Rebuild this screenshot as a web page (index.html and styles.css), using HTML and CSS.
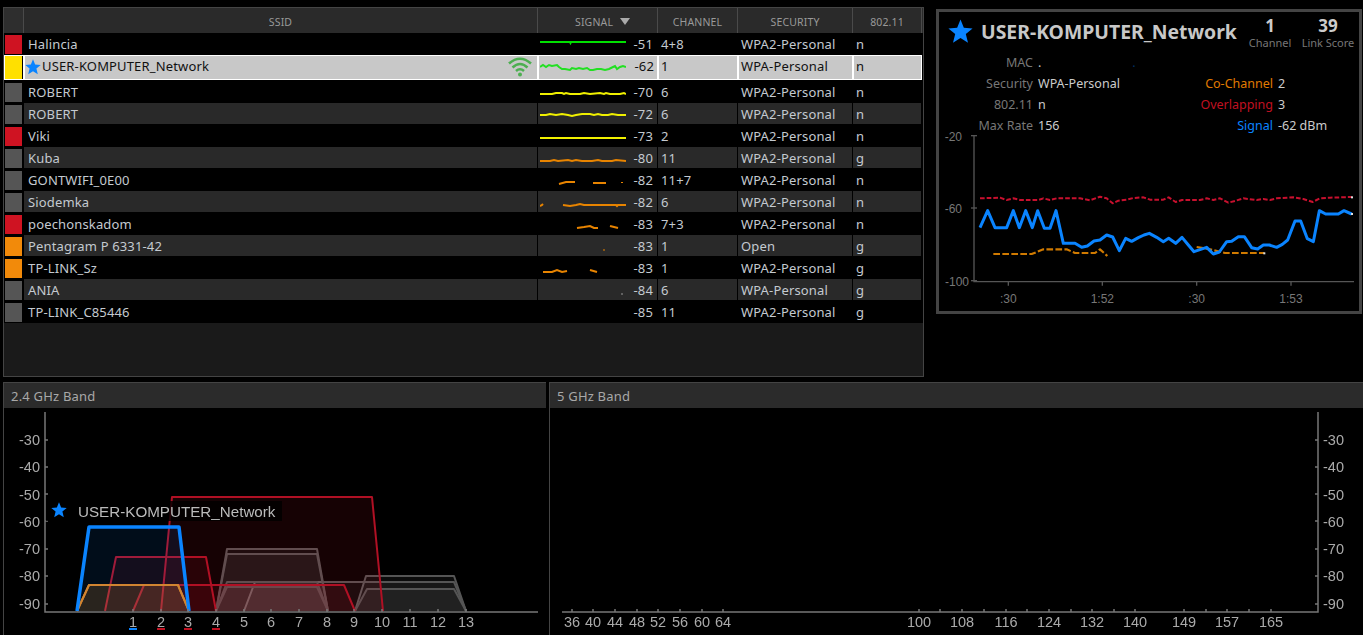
FILE: index.html
```html
<!DOCTYPE html>
<html lang="en">
<head>
	<meta charset="UTF-8">
	<title>Network analyzer</title>
	<link rel="stylesheet" href="styles.css">
</head>
<body>
	<svg class="defs" width="0" height="0">
		<symbol id="star" viewBox="0 0 24 24">
			<polygon points="12,0.5 15.2,8.4 23.6,9 17.1,14.4 19.2,22.8 12,18.3 4.8,22.8 6.9,14.4 0.4,9 8.8,8.4"/>
		</symbol>
	</svg>

	<div class="top">
		<div class="table">
			<div class="row head">
				<div class="cell"></div>
				<div class="cell">SSID</div>
				<div class="cell sorted">SIGNAL <span class="sort"></span></div>
				<div class="cell">CHANNEL</div>
				<div class="cell">SECURITY</div>
				<div class="cell">802.11</div>
			</div>

			<div class="row">
				<div class="cell swatch"><span class="red"></span></div>
				<div class="cell name">Halincia</div>
				<div class="cell signal">
					<svg class="spark green" viewBox="0 0 86 22"><polyline points="0,9 30,9 30.5,10 31,9 86,9"/></svg>
					<span>-51</span>
				</div>
				<div class="cell">4+8</div>
				<div class="cell">WPA2-Personal</div>
				<div class="cell">n</div>
			</div>

			<div class="row selected">
				<div class="cell swatch"><span class="yellow"></span></div>
				<div class="cell name">
					<svg class="row-star"><use href="#star"/></svg><span>USER-KOMPUTER_Network</span>
					<svg class="wifi" viewBox="0 0 24 20">
						<path d="M1,6.5 Q12,-3 23,6.5"/>
						<path d="M4.5,10.5 Q12,3.5 19.5,10.5"/>
						<path d="M8,14 Q12,10.5 16,14"/>
						<circle cx="12" cy="17.5" r="2"/>
					</svg>
				</div>
				<div class="cell signal">
					<svg class="spark bright" viewBox="0 0 86 26"><polyline points="0,12 3,10 6,12 9,10 12,11 17,10 19,12 22,14 25,14 30,15 32,13 36,14 39,13 43,14 47,13 50,15 53,15 57,14 61,14 65,15 69,14 73,12 75,11 77,14 80,12 83,11 86,12"/></svg>
					<span>-62</span>
				</div>
				<div class="cell">1</div>
				<div class="cell">WPA-Personal</div>
				<div class="cell">n</div>
			</div>

			<div class="row">
				<div class="cell swatch"><span></span></div>
				<div class="cell name">ROBERT</div>
				<div class="cell signal">
					<svg class="spark lemon" viewBox="0 0 86 22"><polyline points="0,13 12,13 16,12 22,12 24,13 26,12 30,13 40,13 44,12 50,13 60,12 64,13 66,12 70,13 80,13 84,12 86,13"/></svg>
					<span>-70</span>
				</div>
				<div class="cell">6</div>
				<div class="cell">WPA2-Personal</div>
				<div class="cell">n</div>
			</div>

			<div class="row">
				<div class="cell swatch"><span></span></div>
				<div class="cell name">ROBERT</div>
				<div class="cell signal">
					<svg class="spark lemon" viewBox="0 0 86 22"><polyline points="0,12 6,12 10,11 16,12 22,11 28,12 32,13 36,12 42,11 50,11 54,12 58,11 62,12 68,12 72,11 78,12 86,12"/></svg>
					<span>-72</span>
				</div>
				<div class="cell">6</div>
				<div class="cell">WPA2-Personal</div>
				<div class="cell">n</div>
			</div>

			<div class="row">
				<div class="cell swatch"><span class="red"></span></div>
				<div class="cell name">Viki</div>
				<div class="cell signal">
					<svg class="spark lemon" viewBox="0 0 86 22"><polyline points="0,13 86,13"/></svg>
					<span>-73</span>
				</div>
				<div class="cell">2</div>
				<div class="cell">WPA2-Personal</div>
				<div class="cell">n</div>
			</div>

			<div class="row">
				<div class="cell swatch"><span></span></div>
				<div class="cell name">Kuba</div>
				<div class="cell signal">
					<svg class="spark amber" viewBox="0 0 86 22"><polyline points="0,14 10,14 14,13 18,14 28,13 32,14 36,13 42,14 52,14 58,13 62,14 72,14 76,13 86,14"/></svg>
					<span>-80</span>
				</div>
				<div class="cell">11</div>
				<div class="cell">WPA2-Personal</div>
				<div class="cell">g</div>
			</div>

			<div class="row">
				<div class="cell swatch"><span></span></div>
				<div class="cell name">GONTWIFI_0E00</div>
				<div class="cell signal">
					<svg class="spark amber" viewBox="0 0 86 22"><polyline points="19,15 26,13 35,13"/><polyline points="53,14 66,14"/><polyline class="dot" points="82,13 82,14"/></svg>
					<span>-82</span>
				</div>
				<div class="cell">11+7</div>
				<div class="cell">WPA2-Personal</div>
				<div class="cell">n</div>
			</div>

			<div class="row">
				<div class="cell swatch"><span></span></div>
				<div class="cell name">Siodemka</div>
				<div class="cell signal">
					<svg class="spark amber" viewBox="0 0 86 22"><polyline points="0,15 2,14 3,13"/><polyline points="23,14 30,15 36,14 40,13 44,14 76,14 77,15 78,14 86,14"/></svg>
					<span>-82</span>
				</div>
				<div class="cell">6</div>
				<div class="cell">WPA2-Personal</div>
				<div class="cell">n</div>
			</div>

			<div class="row">
				<div class="cell swatch"><span class="red"></span></div>
				<div class="cell name">poechonskadom</div>
				<div class="cell signal">
					<svg class="spark amber" viewBox="0 0 86 22"><polyline points="37,15 44,14 50,13 54,15 58,15"/><polyline points="70,13 78,15"/></svg>
					<span>-83</span>
				</div>
				<div class="cell">7+3</div>
				<div class="cell">WPA2-Personal</div>
				<div class="cell">n</div>
			</div>

			<div class="row">
				<div class="cell swatch"><span class="orange"></span></div>
				<div class="cell name">Pentagram P 6331-42</div>
				<div class="cell signal">
					<svg class="spark amber thin" viewBox="0 0 86 22"><polyline points="64,14 64,16"/></svg>
					<span>-83</span>
				</div>
				<div class="cell">1</div>
				<div class="cell">Open</div>
				<div class="cell">g</div>
			</div>

			<div class="row">
				<div class="cell swatch"><span class="orange"></span></div>
				<div class="cell name">TP-LINK_Sz</div>
				<div class="cell signal">
					<svg class="spark amber" viewBox="0 0 86 22"><polyline points="3,15 12,15 17,13 22,15 27,14"/><polyline points="50,13 57,15"/></svg>
					<span>-83</span>
				</div>
				<div class="cell">1</div>
				<div class="cell">WPA2-Personal</div>
				<div class="cell">g</div>
			</div>

			<div class="row">
				<div class="cell swatch"><span></span></div>
				<div class="cell name">ANIA</div>
				<div class="cell signal">
					<svg class="spark ash thin" viewBox="0 0 86 22"><polyline points="82,14 82,16"/></svg>
					<span>-84</span>
				</div>
				<div class="cell">6</div>
				<div class="cell">WPA-Personal</div>
				<div class="cell">g</div>
			</div>

			<div class="row">
				<div class="cell swatch"><span></span></div>
				<div class="cell name">TP-LINK_C85446</div>
				<div class="cell signal">
					<svg class="spark" viewBox="0 0 86 22"></svg>
					<span>-85</span>
				</div>
				<div class="cell">11</div>
				<div class="cell">WPA2-Personal</div>
				<div class="cell">g</div>
			</div>
		</div>

		<div class="detail">
			<div class="detail-head">
				<svg class="detail-star"><use href="#star"/></svg>
				<div class="detail-title">USER-KOMPUTER_Network</div>
				<div class="stat"><b>1</b><span>Channel</span></div>
				<div class="stat"><b>39</b><span>Link Score</span></div>
			</div>
			<div class="facts">
				<div class="label">MAC</div><div class="value">.<span class="mac-end">.</span></div><div class="label"></div><div class="value"></div>
				<div class="label">Security</div><div class="value">WPA-Personal</div><div class="label co">Co-Channel</div><div class="value">2</div>
				<div class="label">802.11</div><div class="value">n</div><div class="label over">Overlapping</div><div class="value">3</div>
				<div class="label">Max Rate</div><div class="value">156</div><div class="label sig">Signal</div><div class="value">-62 dBm</div>
			</div>
			<!-- drawn in 3x units -->
			<svg class="history" viewBox="27 -120 1260 573">
				<g class="axis">
					<polyline points="132,-73 132,365 1272,365"/>
					<polyline points="123,-73 141,-73"/>
					<polyline points="123,144 141,144"/>
					<polyline points="123,362 141,362"/>
					<polyline points="235,365 235,377"/>
					<polyline points="517,365 517,377"/>
					<polyline points="800,365 800,377"/>
					<polyline points="1083,365 1083,377"/>
				</g>
				<g class="ticks">
					<text x="96" y="-56" text-anchor="end">-20</text>
					<text x="96" y="160" text-anchor="end">-60</text>
					<text x="117" y="378" text-anchor="end">-100</text>
					<text x="235" y="428" text-anchor="middle">:30</text>
					<text x="517" y="428" text-anchor="middle">1:52</text>
					<text x="800" y="428" text-anchor="middle">:30</text>
					<text x="1083" y="428" text-anchor="middle">1:53</text>
				</g>
				<polyline class="h-red" points="150,115 210,113 230,120 250,115 270,120 325,120 340,115 360,120 380,115 450,115 480,121 510,110 530,115 548,130 565,122 590,119 610,114 640,112 660,119 700,119 716,112 737,126 756,120 810,120 830,115 850,120 870,115 895,128 915,123 940,115 980,120 1000,117 1020,120 1040,115 1090,112 1120,117 1148,126 1170,115 1200,113 1265,111"/>
				<polyline class="h-orange" points="190,282 305,282 340,268 410,268 435,279 495,279 510,268 532,288"/>
				<polyline class="h-orange" points="800,261 840,268 885,279 1003,279"/>
				<polyline class="h-blue" points="150,203 173,152 195,203 230,203 250,152 268,203 287,152 307,203 323,152 343,205 360,205 378,152 400,250 435,250 455,262 472,258 492,243 510,240 530,225 548,231 568,272 587,235 605,244 625,233 642,225 658,220 680,232 700,245 716,235 737,250 756,232 775,255 792,275 812,268 830,262 850,282 868,276 890,245 905,244 925,230 943,230 965,263 983,267 1000,255 1018,255 1040,262 1057,253 1073,240 1095,183 1112,183 1132,236 1150,245 1168,152 1187,162 1225,162 1242,152 1265,162"/>
				<rect class="end" x="1263" y="109" width="6" height="6"/>
				<rect class="end" x="1263" y="159" width="6" height="6"/>
				<rect class="end" x="1000" y="277" width="6" height="6"/>
			</svg>
		</div>
	</div>

	<div class="bands">
		<div class="band narrow">
			<div class="band-head">2.4 GHz Band</div>
			<svg class="band-plot" viewBox="4 408 542 227">
				<g class="net gray">
					<polyline points="355,611 366,576 454,576 466,611"/>
					<polyline points="244,611 255,582 454,582 466,611"/>
					<polyline points="355,611 367,589 454,589 466,611"/>
					<polyline points="216,611 227,549 317,549 328,611"/>
					<polyline points="216,611 227,554 317,554 328,611"/>
					<polyline points="216,611 227,582 317,582 328,611"/>
					<polyline points="216,611 227,587 317,587 328,611"/>
				</g>
				<g class="net red">
					<polyline points="161,611 172,497 372,497 383,611"/>
					<polyline points="105,611 116,557 206,557 216,611"/>
					<polyline points="133,611 144,585 344,585 355,611"/>
				</g>
				<polyline class="net-one orange" points="77,611 89,585 178,585 189,611"/>
				<polyline class="net-one orange" points="77,611 89,585 178,585 189,611"/>
				<polyline class="net-one blue" points="77,611 89,527 179,527 189,611"/>

				<g class="axis">
					<polyline points="45,412 45,612 538,612"/>
					<polyline points="45,440 48,440"/><polyline points="45,467 48,467"/><polyline points="45,494 48,494"/>
					<polyline points="45,521 48,521"/><polyline points="45,549 48,549"/><polyline points="45,576 48,576"/><polyline points="45,604 48,604"/>
					<polyline points="133,609 133,612"/><polyline points="161,609 161,612"/><polyline points="188,609 188,612"/><polyline points="216,609 216,612"/>
					<polyline points="244,609 244,612"/><polyline points="271,609 271,612"/><polyline points="299,609 299,612"/><polyline points="327,609 327,612"/>
					<polyline points="354,609 354,612"/><polyline points="382,609 382,612"/><polyline points="410,609 410,612"/><polyline points="438,609 438,612"/><polyline points="466,609 466,612"/>
				</g>
				<g class="scale">
					<text x="40" y="445" text-anchor="end">-30</text>
					<text x="40" y="472" text-anchor="end">-40</text>
					<text x="40" y="500" text-anchor="end">-50</text>
					<text x="40" y="527" text-anchor="end">-60</text>
					<text x="40" y="554" text-anchor="end">-70</text>
					<text x="40" y="581" text-anchor="end">-80</text>
					<text x="40" y="609" text-anchor="end">-90</text>
				</g>
				<g class="scale" text-anchor="middle">
					<text x="133" y="627">1</text><text x="161" y="627">2</text><text x="188" y="627">3</text><text x="216" y="627">4</text>
					<text x="244" y="627">5</text><text x="271" y="627">6</text><text x="299" y="627">7</text><text x="327" y="627">8</text>
					<text x="354" y="627">9</text><text x="382" y="627">10</text><text x="410" y="627">11</text><text x="438" y="627">12</text><text x="466" y="627">13</text>
				</g>
				<rect class="mark-blue" x="129" y="628" width="8" height="2"/>
				<rect class="mark-red" x="157" y="628" width="8" height="2"/>
				<rect class="mark-red" x="184" y="628" width="8" height="2"/>
				<rect class="mark-red" x="212" y="628" width="8" height="2"/>

				<rect class="tag-bg" x="46" y="501" width="236" height="20"/>
				<use class="tag-star" href="#star" x="51" y="502" width="16" height="16"/>
				<text class="tag" x="78" y="517">USER-KOMPUTER_Network</text>
			</svg>
		</div>

		<div class="band wide">
			<div class="band-head">5 GHz Band</div>
			<svg class="band-plot" viewBox="550 408 813 227">
				<g class="axis">
					<polyline points="1318,412 1318,612 562,612"/>
					<polyline points="1315,440 1318,440"/><polyline points="1315,467 1318,467"/><polyline points="1315,494 1318,494"/>
					<polyline points="1315,521 1318,521"/><polyline points="1315,549 1318,549"/><polyline points="1315,576 1318,576"/><polyline points="1315,604 1318,604"/>
					<polyline points="572,609 572,612"/><polyline points="593,609 593,612"/><polyline points="615,609 615,612"/><polyline points="637,609 637,612"/>
					<polyline points="658,609 658,612"/><polyline points="680,609 680,612"/><polyline points="702,609 702,612"/><polyline points="723,609 723,612"/>
					<polyline points="919,609 919,612"/><polyline points="940,609 940,612"/><polyline points="962,609 962,612"/><polyline points="984,609 984,612"/>
					<polyline points="1006,609 1006,612"/><polyline points="1027,609 1027,612"/><polyline points="1049,609 1049,612"/><polyline points="1071,609 1071,612"/>
					<polyline points="1092,609 1092,612"/><polyline points="1114,609 1114,612"/><polyline points="1135,609 1135,612"/><polyline points="1184,609 1184,612"/>
					<polyline points="1206,609 1206,612"/><polyline points="1227,609 1227,612"/><polyline points="1249,609 1249,612"/><polyline points="1271,609 1271,612"/>
				</g>
				<g class="scale">
					<text x="1323" y="445">-30</text>
					<text x="1323" y="472">-40</text>
					<text x="1323" y="500">-50</text>
					<text x="1323" y="527">-60</text>
					<text x="1323" y="554">-70</text>
					<text x="1323" y="581">-80</text>
					<text x="1323" y="609">-90</text>
				</g>
				<g class="scale" text-anchor="middle">
					<text x="572" y="627">36</text><text x="593" y="627">40</text><text x="615" y="627">44</text><text x="637" y="627">48</text>
					<text x="658" y="627">52</text><text x="680" y="627">56</text><text x="702" y="627">60</text><text x="723" y="627">64</text>
					<text x="919" y="627">100</text><text x="962" y="627">108</text><text x="1006" y="627">116</text><text x="1049" y="627">124</text>
					<text x="1092" y="627">132</text><text x="1135" y="627">140</text><text x="1184" y="627">149</text><text x="1227" y="627">157</text><text x="1271" y="627">165</text>
				</g>
			</svg>
		</div>
	</div>
</body>
</html>
```

FILE: styles.css
```css
html, body {
	margin: 0;
	height: 100%;
	overflow: hidden;
}
body {
	background: #000;
	color: #ccc;
	font-family: "Noto Sans", "Open Sans", sans-serif;
	font-size: 13px;
	display: flex;
	flex-direction: column;
}
.defs {
	position: absolute;
}
.top {
	display: flex;
	align-items: flex-start;
	gap: 12px;
	height: 382px;
	padding: 7px 1px 0 3px;
	box-sizing: border-box;
}

/* network table */
.table {
	width: 921px;
	height: 370px;
	flex: none;
	box-sizing: border-box;
	border: 1px solid #444;
	background: #1a1a1a;
}
.row {
	display: grid;
	grid-template-columns: 20px 514px 120px 80px 115px 69px;
	height: 22px;
	background: #000;
}
.row:nth-child(odd) .cell {
	background: #292929;
	height: 21px;
}
.row.head {
	height: 25px;
	background: #2a2a2a;
}
.row.head .cell {
	height: 25px;
	background: #2a2a2a;
	justify-content: center;
	padding: 2px 0 0;
	color: #999;
	font-size: 10.5px;
	border-right: 1px solid #4a4a4a;
}
.row.head .cell.sorted {
	padding-left: 10px;
}
.head .sort {
	display: inline-block;
	margin-left: 7px;
	border-left: 5px solid transparent;
	border-right: 5px solid transparent;
	border-top: 7px solid #aaa;
}
.row.head .cell:first-child {
	background: #2e2e2e;
}
.cell {
	display: flex;
	align-items: center;
	box-sizing: border-box;
	padding-left: 3px;
	border-right: 1px solid #000;
	color: #c4cad0;
	letter-spacing: .15px;
	white-space: nowrap;
}
.row .cell.swatch {
	padding: 1px 1px 0 1px;
	background: #000;
	height: 22px;
}
.swatch span {
	display: block;
	width: 17px;
	height: 19px;
	background: #555;
}
.swatch .red {
	background: #cf1322;
}
.swatch .orange {
	background: #f28a0a;
}
.swatch .yellow {
	background: #ffe000;
	height: 23px;
	width: 17px;
}
.name {
	padding-left: 4px;
	position: relative;
}
.signal {
	padding: 0 4px 0 2px;
	justify-content: space-between;
}
.signal span {
	margin-left: 2px;
}
.spark {
	width: 86px;
	height: 22px;
	flex: none;
}
.spark polyline {
	fill: none;
	stroke-width: 2;
}
.green polyline { stroke: #00e000; }
.bright polyline { stroke: #22e022; }
.lemon polyline { stroke: #f0f000; }
.amber polyline { stroke: #e88400; }
.ash polyline { stroke: #999; }
.spark.thin polyline { stroke-width: 1; }

.row.selected {
	height: 26px;
}
.row.selected .cell {
	background: #c8c8c8;
	border: 1px solid #fff;
	color: #111;
	height: 25px;
	padding: 0 0 3px 2px;
}
.row.selected .cell.name {
	padding-left: 0;
}
.row.selected .cell.signal {
	padding: 0 3px 3px 1px;
}
.row.selected .cell.swatch {
	padding: 0;
	height: 25px;
	background: #000;
}
.selected .spark {
	height: 26px;
	margin-bottom: -3px;
}
.selected .signal span {
	align-self: center;
}
.row-star {
	width: 16px;
	height: 16px;
	margin: 2px 1px 0 0;
	flex: none;
	fill: #0a84ff;
}
.wifi {
	position: absolute;
	right: 5px;
	top: 1px;
	width: 24px;
	height: 20px;
	fill: none;
	stroke: #4caf50;
	stroke-width: 2.6;
}
.wifi circle {
	fill: #4caf50;
	stroke: none;
}

/* selected network panel */
.detail {
	flex: 1;
	height: 305px;
	margin-top: 2px;
	box-sizing: border-box;
	border: 3px solid #444;
	display: flex;
	flex-direction: column;
}
.detail-head {
	display: flex;
	align-items: center;
	height: 38px;
	padding-left: 9px;
	flex: none;
}
.detail-star {
	width: 25px;
	height: 25px;
	fill: #0a84ff;
	margin-right: 8px;
}
.detail-title {
	flex: 1;
	font-size: 19.4px;
	font-weight: 700;
	color: #c8c8c8;
	white-space: nowrap;
}
.stat {
	display: flex;
	flex-direction: column;
	align-items: center;
	width: 54px;
	margin-right: 4px;
	padding-top: 3px;
	line-height: 15px;
}
.stat b {
	font-size: 17px;
	line-height: 19px;
	color: #ccc;
}
.stat span {
	font-size: 11px;
	color: #777;
	white-space: nowrap;
}
.facts {
	display: grid;
	grid-template-columns: 94px 140px 100px 1fr;
	grid-auto-rows: 21px;
	align-items: center;
	font-size: 12.5px;
	flex: none;
	margin-top: 2px;
}
.label {
	text-align: right;
	color: #777;
}
.value {
	padding-left: 5px;
	color: #ccc;
}
.mac-end {
	margin-left: 91px;
	color: #036;
}
.label.co { color: #e07b00; }
.label.over { color: #c01020; }
.label.sig { color: #0a84ff; }

.history {
	width: 420px;
	height: 191px;
	flex: none;
	margin-top: -16px;
}
.axis polyline {
	fill: none;
	stroke: #666;
	stroke-width: 4;
}
.ticks text {
	font-family: "Liberation Sans", sans-serif;
	font-size: 36px;
	fill: #777;
}
.history .axis polyline {
	stroke: #555;
}
.h-red, .h-orange, .h-blue {
	fill: none;
	stroke-linejoin: round;
}
.h-red {
	stroke: #c8102e;
	stroke-width: 6;
	stroke-dasharray: 14 6;
}
.h-orange {
	stroke: #d07a00;
	stroke-width: 6.5;
	stroke-dasharray: 20 7;
}
.h-blue {
	stroke: #0a84ff;
	stroke-width: 9;
}
.end {
	fill: #ddd;
}

/* band charts */
.bands {
	display: flex;
	gap: 3px;
	flex: 1;
	min-height: 0;
	padding-left: 3px;
}
.band {
	display: flex;
	flex-direction: column;
	box-sizing: border-box;
	border-left: 1px solid #444;
	border-top: 1px solid #444;
}
.band.narrow {
	width: 543px;
}
.band.wide {
	flex: 1;
}
.band-head {
	height: 25px;
	flex: none;
	display: flex;
	align-items: center;
	padding-left: 7px;
	background: #2b2b2b;
	color: #a8a8a8;
	letter-spacing: .2px;
}
.band-plot {
	flex: 1;
	min-height: 0;
	width: 100%;
	filter: blur(.35px);
}
.band-plot .axis polyline {
	stroke: #777;
	stroke-width: 1.5;
}
.scale text {
	font-family: "Liberation Sans", sans-serif;
	font-size: 14.5px;
	fill: #aaa;
}
.net polyline {
	stroke-width: 2;
	stroke-linejoin: round;
}
.net.gray polyline {
	stroke: #555;
	fill: rgba(200, 200, 200, .06);
}
.net.red polyline {
	stroke: #b01024;
	fill: rgba(200, 16, 32, .11);
}
.net-one {
	stroke-linejoin: round;
}
.net-one.orange {
	stroke: #e8851a;
	stroke-width: 2;
	fill: rgba(232, 133, 26, .1);
}
.net-one.blue {
	stroke: #0a84ff;
	stroke-width: 3.5;
	fill: rgba(10, 132, 255, .1);
}
.mark-blue { fill: #0a84ff; }
.mark-red { fill: #c01020; }
.tag-bg {
	fill: rgba(0, 0, 0, .8);
}
.tag-star {
	fill: #0a84ff;
}
.tag {
	font-family: "Liberation Sans", sans-serif;
	font-size: 15.2px;
	fill: #bbb;
}
```
